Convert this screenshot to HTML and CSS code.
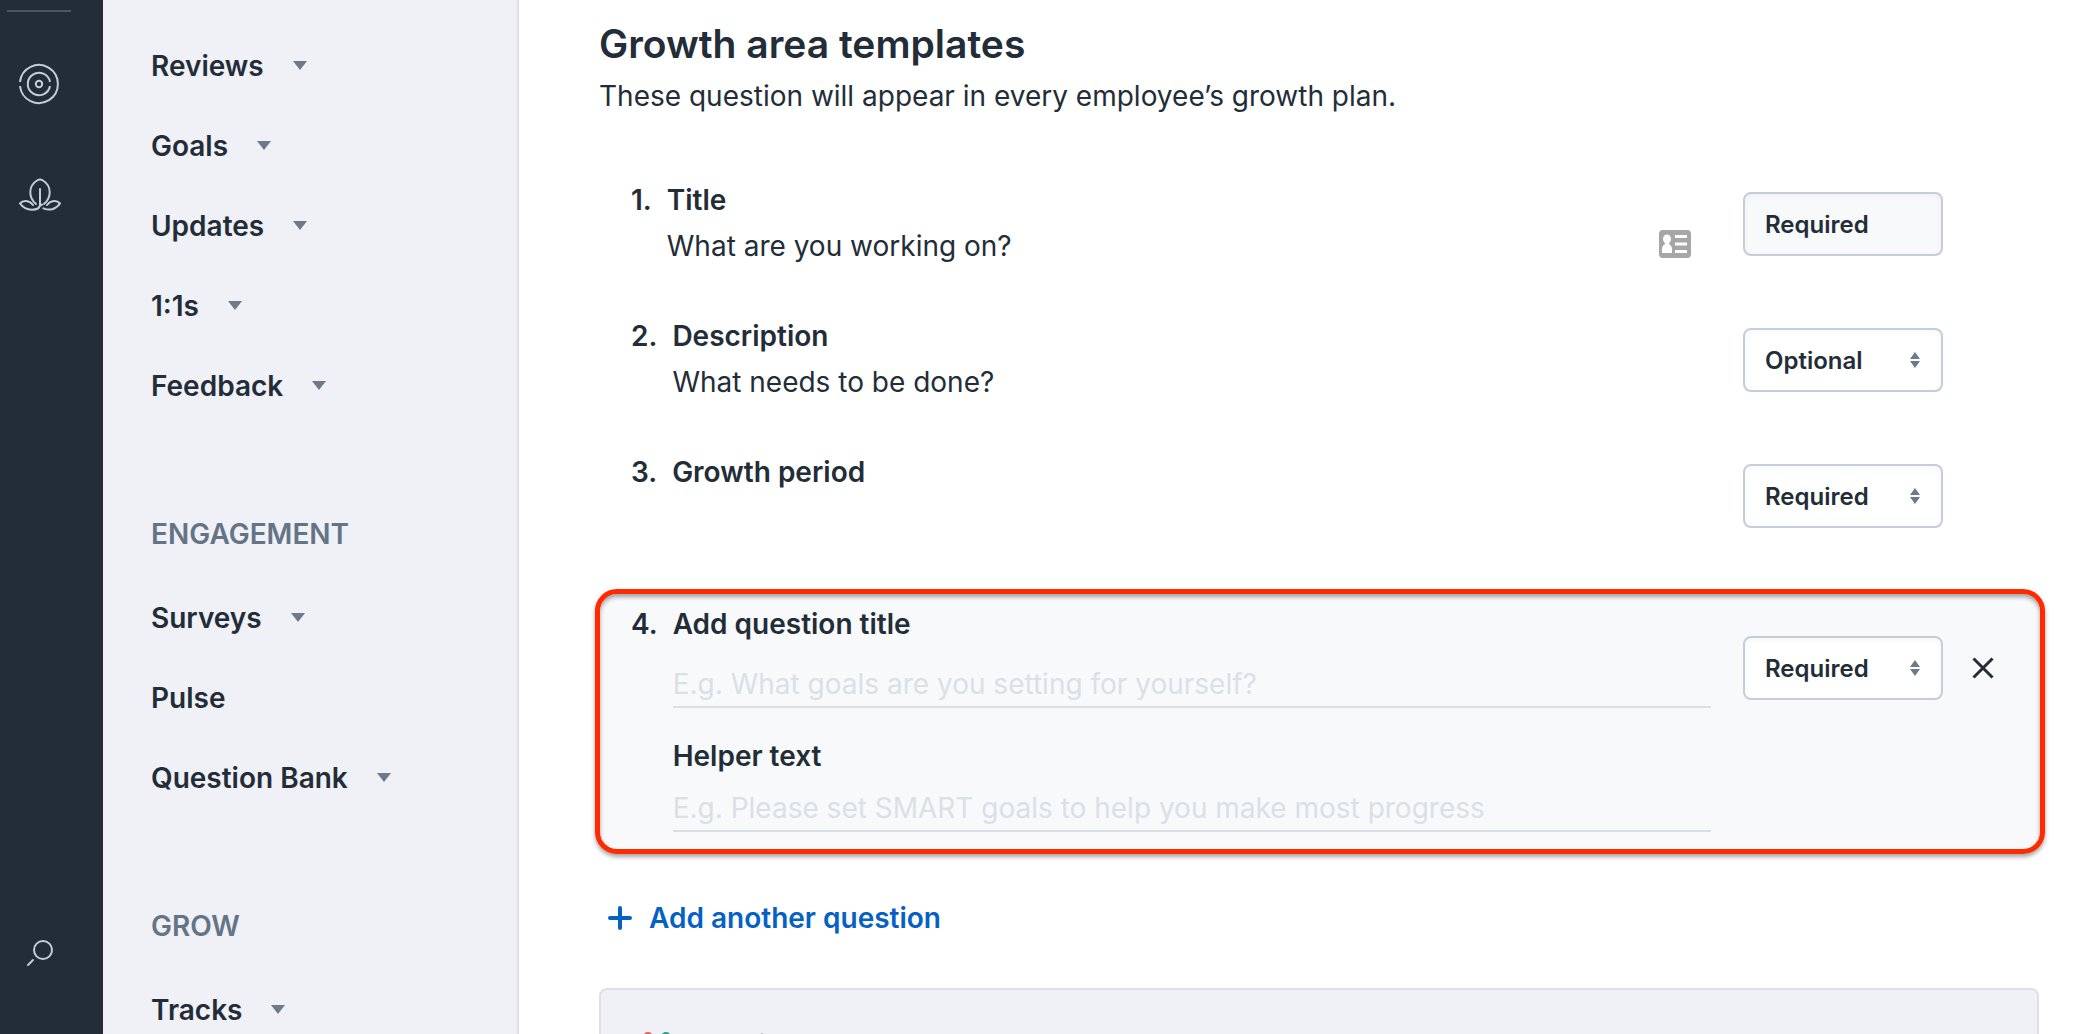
FILE: index.html
```
<!DOCTYPE html>
<html lang="en">
<head>
    <meta charset="UTF-8">
    <meta name="viewport" content="width=device-width, initial-scale=1.0">
    <title>Growth area templates</title>
    <link rel="stylesheet" href="styles.css">
</head>
<body>
    <div class="app">
        <nav class="rail" aria-label="Main">
            <hr class="rail-divider">
            <a class="rail-link" href="#" aria-label="Goals">
                <svg width="42" height="42" viewBox="0 0 42 42" fill="none" stroke="currentColor" stroke-width="2">
                    <path d="M2 19a19 19 0 1 1 0 4"/>
                    <path d="M32 19a11.2 11.2 0 1 0 0 4"/>
                    <circle cx="21" cy="21" r="3.2"/>
                </svg>
            </a>
            <a class="rail-link rail-link-grow" href="#" aria-label="Grow">
                <svg width="42" height="34" viewBox="0 0 42 34" fill="none" stroke="currentColor" stroke-width="2" stroke-linecap="round" stroke-linejoin="round">
                    <path d="M17 26C9.500 20 9 8 18 2.500Q21 .5 24 2.500C33 8 32.500 20 25 26"/>
                    <path d="M21 11v16c-1 6-14 7-20-1.500 3-3.500 9-3.500 13 1.500"/>
                    <path d="M21 27.500c1 0 1.500-.5 2-1"/>
                    <path d="M28 27c4-5 10-5 13-1.500-4 6-11 7.500-16.500 4.800"/>
                </svg>
            </a>
            <a class="rail-link rail-search" href="#" aria-label="Search">
                <svg width="28" height="28" viewBox="0 0 28 28" fill="none" stroke="currentColor" stroke-width="2" stroke-linecap="round">
                    <circle cx="17" cy="11" r="9"/>
                    <path d="M2 26l5-5"/>
                </svg>
            </a>
        </nav>

        <aside class="sidebar">
            <ul class="menu">
                <li><a href="#">Reviews <span class="caret"></span></a></li>
                <li><a href="#">Goals <span class="caret"></span></a></li>
                <li><a href="#">Updates <span class="caret"></span></a></li>
                <li><a href="#">1:1s <span class="caret"></span></a></li>
                <li><a href="#">Feedback <span class="caret"></span></a></li>
            </ul>
            <h2>ENGAGEMENT</h2>
            <ul class="menu">
                <li><a href="#">Surveys <span class="caret"></span></a></li>
                <li><a href="#">Pulse</a></li>
                <li><a href="#">Question Bank <span class="caret"></span></a></li>
            </ul>
            <h2>GROW</h2>
            <ul class="menu">
                <li><a href="#">Tracks <span class="caret"></span></a></li>
            </ul>
        </aside>

        <main class="content">
            <h1>Growth area templates</h1>
            <p class="intro">These question will appear in every employee’s growth plan.</p>

            <section class="question">
                <span class="number">1.</span>
                <div class="body">
                    <h3>Title</h3>
                    <p>What are you working on?</p>
                </div>
                <svg class="card-icon" width="32" height="28" viewBox="0 0 32 28">
                    <rect width="32" height="28" rx="4" fill="#a6a6a6"/>
                    <g fill="#fff">
                        <ellipse cx="8" cy="9" rx="4" ry="4.500"/>
                        <path d="M6 12h4v2c2 1 3 3 3 5v4H3v-4c0-2 1-4 3-5z"/>
                        <path d="M16 5h12v3H16zM16 12.500h12v3H16zM16 20h12v3H16z"/>
                    </g>
                </svg>
                <div class="select">
                    <select aria-label="Title requirement" disabled>
                        <option>Required</option>
                    </select>
                </div>
            </section>

            <section class="question">
                <span class="number">2.</span>
                <div class="body">
                    <h3>Description</h3>
                    <p>What needs to be done?</p>
                </div>
                <div class="select">
                    <select aria-label="Description requirement">
                        <option>Optional</option>
                        <option>Required</option>
                    </select>
                    <svg class="arrows" width="10" height="16" viewBox="0 0 10 16"><path d="M5 0l5 7H0zM0 9h10l-5 7z"/></svg>
                </div>
            </section>

            <section class="question">
                <span class="number">3.</span>
                <div class="body">
                    <h3>Growth period</h3>
                </div>
                <div class="select">
                    <select aria-label="Growth period requirement">
                        <option>Required</option>
                        <option>Optional</option>
                    </select>
                    <svg class="arrows" width="10" height="16" viewBox="0 0 10 16"><path d="M5 0l5 7H0zM0 9h10l-5 7z"/></svg>
                </div>
            </section>

            <section class="question editing">
                <span class="number">4.</span>
                <div class="body">
                    <label for="question-title">Add question title</label>
                    <input id="question-title" class="title-input" type="text" placeholder="E.g. What goals are you setting for yourself?">
                    <label for="helper-text">Helper text</label>
                    <input id="helper-text" type="text" placeholder="E.g. Please set SMART goals to help you make most progress">
                </div>
                <div class="select">
                    <select aria-label="New question requirement">
                        <option>Required</option>
                        <option>Optional</option>
                    </select>
                    <svg class="arrows" width="10" height="16" viewBox="0 0 10 16"><path d="M5 0l5 7H0zM0 9h10l-5 7z"/></svg>
                </div>
                <button class="remove" type="button" aria-label="Remove question">
                    <svg width="22" height="22" viewBox="0 0 22 22" fill="none" stroke="currentColor" stroke-width="3"><path d="M1.500 1.500l19 19M20.500 1.500l-19 19"/></svg>
                </button>
            </section>

            <button class="add" type="button">
                <svg width="24" height="24" viewBox="0 0 24 24" fill="none" stroke="currentColor" stroke-width="4" stroke-linecap="round"><path d="M12 2v20M2 12h20"/></svg>
                Add another question
            </button>

            <div class="panel">
                <svg width="140" height="40" viewBox="0 0 140 40">
                    <circle cx="7" cy="5" r="5" fill="#e8604f"/>
                    <circle cx="25" cy="5" r="5" fill="#1aa583"/>
                    <path d="M120 1h2v8h-2z" fill="#b4bac4"/>
                </svg>
            </div>
        </main>
    </div>
</body>
</html>
```
FILE: styles.css
```
* {
    box-sizing: border-box;
}
body {
    margin: 0;
    font-family: Inter, sans-serif;
    font-size: 28px;
    line-height: 40px;
    color: #232d38;
    background: #fff;
}
h1, h2, h3, p, ul {
    margin: 0;
    padding: 0;
}
button, input, select {
    font: inherit;
    color: inherit;
}
a {
    color: inherit;
    text-decoration: none;
}
svg {
    display: block;
}
.app {
    display: flex;
    height: 100vh;
    overflow: hidden;
}

/* dark icon rail */
.rail {
    display: flex;
    flex-direction: column;
    flex: none;
    width: 103px;
    padding: 10px 0 67px;
    background: #232d37;
    color: #c4cdd6;
}
.rail-divider {
    width: 64px;
    height: 2px;
    margin: 0 0 51px 7px;
    border: 0;
    background: #4a5866;
}
.rail-link {
    margin-left: 18px;
}
.rail-link-grow {
    margin-top: 73px;
    margin-left: 19px;
}
.rail-search {
    margin-top: auto;
    margin-left: 26px;
}

/* section menu */
.sidebar {
    flex: none;
    width: 416px;
    padding: 26px 0 0 48px;
    background: #f0f1f6;
    border-right: 2px solid #dce1e7;
    font-weight: 600;
}
.sidebar h2 {
    margin: 88px 0 24px;
    font-size: 28px;
    font-weight: 600;
    color: #647487;
}
.menu {
    list-style: none;
}
.menu a {
    display: flex;
    align-items: center;
    gap: 29px;
    height: 80px;
}
.caret {
    margin-bottom: 2px;
    border: 7px solid transparent;
    border-top: 9px solid #6b7b8c;
    border-bottom: 0;
}

/* page */
.content {
    flex: 1;
    min-width: 0;
    padding: 20px 50px 0 80px;
}
h1 {
    font-size: 39px;
    line-height: 48px;
    font-weight: 600;
}
.intro {
    margin: 8px 0 64px;
}
.question {
    display: flex;
    align-items: flex-start;
    min-height: 136px;
    padding: 0 96px 0 32px;
}
.number {
    margin-right: 15px;
    font-weight: 600;
}
.body {
    flex: 1;
    margin-right: 32px;
}
.body h3,
.body label {
    display: block;
    font-size: 28px;
    font-weight: 600;
}
.body p {
    margin-top: 6px;
}
.body input {
    display: block;
    width: 100%;
    height: 46px;
    margin: 10px 0 0;
    padding: 0;
    border: 0;
    border-bottom: 2px solid #dae0e6;
    background: none;
}
.body .title-input {
    margin: 18px 0 28px;
}
.body input::placeholder {
    color: #dae0e6;
    opacity: 1;
}
.card-icon {
    margin: 50px 52px 0 0;
}
.select {
    position: relative;
    width: 200px;
    margin-top: 12px;
}
.select select {
    display: block;
    width: 100%;
    height: 64px;
    padding: 2px 40px 0 20px;
    border: 2px solid #c4cdd9;
    border-radius: 8px;
    background: #fff;
    box-shadow: inset 0 2px 6px rgba(0, 0, 0, 0.04);
    font-size: 24px;
    font-weight: 600;
    appearance: none;
}
.select select:disabled {
    background: #f7f9fb;
    opacity: 1;
}
.arrows {
    position: absolute;
    top: 24px;
    right: 23px;
    fill: #6b7b8c;
    pointer-events: none;
}

/* question being added */
.editing {
    margin: 1px -6px 44px -4px;
    padding: 10px 46px 17px 31px;
    border: 5px solid #ff2a00;
    border-radius: 22px;
    background: #f8f9fb;
    box-shadow: 0 3px 4px rgba(0, 0, 0, 0.35), inset 0 3px 4px rgba(0, 0, 0, 0.35);
}
.editing .select {
    margin-top: 32px;
}
.remove {
    margin: 53px 0 0 29px;
    padding: 0;
    border: 0;
    background: none;
}
.add {
    display: flex;
    align-items: center;
    gap: 17px;
    margin: 0 0 50px 9px;
    padding: 0;
    border: 0;
    background: none;
    color: #0561c4;
    font-weight: 600;
}
.panel {
    height: 200px;
    padding: 42px 40px;
    border: 2px solid #dae0e6;
    border-radius: 8px;
    background: #f0f1f6;
}
```
